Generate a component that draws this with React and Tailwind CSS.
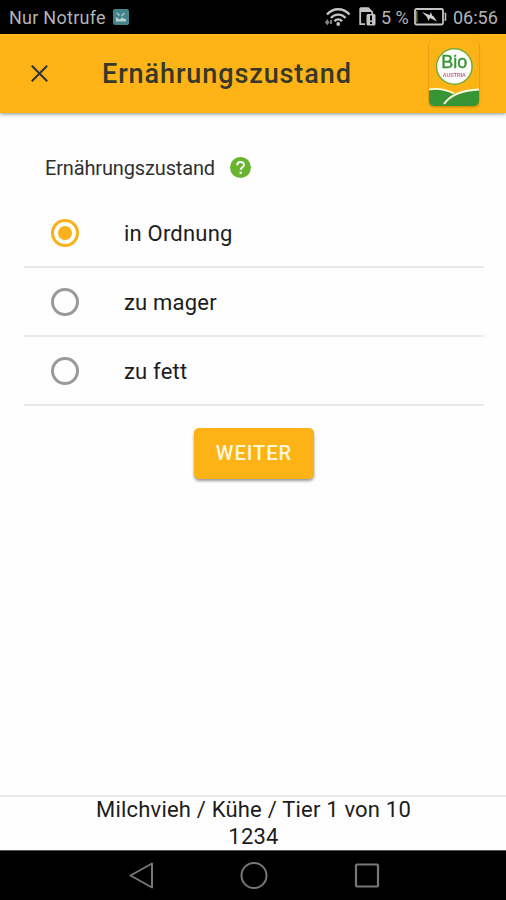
import React from 'react';

const options = [
  { label: 'in Ordnung', checked: true },
  { label: 'zu mager', checked: false },
  { label: 'zu fett', checked: false },
];

const WifiIcon = () => (
  <svg className="w-[27px] h-[20px]" viewBox="0 0 27 20" fill="none" stroke="#c4c4c4">
    <path d="M2 7.500C8 .5 18.500.5 24.500 7.500" strokeWidth="2.400" />
    <path d="M6 11C9.500 6.500 17 6.500 20.500 11" strokeWidth="2.400" />
    <path d="M9.500 14.200C11.500 11.700 15 11.700 17 14.200" strokeWidth="2.400" />
    <circle cx="13.200" cy="17" r="1.900" fill="#c4c4c4" stroke="none" />
    <path d="M2.300 12.500v3M.5 14.500l1.800 2.500 1.800-2.500" strokeWidth="1.600" stroke="#8a8a8a" />
    <path d="M6 17v-4" strokeWidth="1.800" stroke="#8a8a8a" />
  </svg>
);

const SimIcon = () => (
  <svg className="w-[17px] h-[20px]" viewBox="0 0 17 20" fill="none">
    <path d="M1.200 1.200h8l4 4v3M6 17.200H1.200V1.200" stroke="#c4c4c4" strokeWidth="1.800" />
    <path d="M1.500 1.500h7.500l3.500 3.500h-11z" fill="#c4c4c4" />
    <rect x="7.500" y="7" width="9" height="11.500" rx="1.500" fill="#c4c4c4" />
    <path d="M12 8.500v5M12 15v2" stroke="#000" strokeWidth="2" />
  </svg>
);

const BatteryIcon = () => (
  <svg className="w-[33px] h-[18px]" viewBox="0 0 33 18" fill="none">
    <rect x="1" y="1" width="28" height="15.500" rx="1.500" stroke="#c4c4c4" strokeWidth="1.800" />
    <path d="M2.800 3v11.500" stroke="#6f7d3d" strokeWidth="1.500" />
    <path d="M30.500 5.500h1v6.500h-1" stroke="#c4c4c4" strokeWidth="1.500" />
    <path d="M8 4l7.500 3L17 4l1.200 4 .8-.5L23 13.500l-7-3.500-1.500 3-1.500-4z" fill="#d0d0d0" />
  </svg>
);

const StatusBar = () => (
  <div className="flex h-[34px] shrink-0 items-center bg-black pl-[9px] text-[18px] text-[#b4b4b4]">
    <span className="w-[104px] whitespace-nowrap tracking-[0.26px]">Nur Notrufe</span>
    <svg className="w-4 h-4" viewBox="0 0 16 16">
      <rect width="16" height="16" rx="2" fill="#41848b" />
      <path d="M3 12.500V8l3.500 2.500L9 8.500l4 2v2z" fill="#b9d0d2" />
      <path d="M4 4l2.500 2.500M11.500 4L8.500 7" stroke="#a5c5c8" strokeWidth="1.500" />
    </svg>
    <div className="ml-[196px] flex items-center">
      <WifiIcon />
      <div className="ml-[7px]"><SimIcon /></div>
      <span className="ml-[5px] w-[33px] whitespace-nowrap">5 %</span>
      <BatteryIcon />
      <span className="ml-[6px] whitespace-nowrap">06:56</span>
    </div>
  </div>
);

const BioLogo = () => (
  <svg className="mb-[2px] w-[50px] h-[66px] drop-shadow-[0_1px_1px_rgba(80,50,0,0.4)]" viewBox="0 0 50 66">
    <rect width="50" height="66" rx="5" fill="#fbb316" />
    <path d="M0 50C10 48 19 50 26 54 34 50 42 49 50 49V61a5 5 0 0 1-5 5H5a5 5 0 0 1-5-5z" fill="#389536" />
    <path d="M0 49.500C10 47.500 18 50 25 53.500" fill="none" stroke="#fffbe0" strokeWidth="1.800" />
    <path d="M15 64C22 54 35 50 50 49.500" fill="none" stroke="#fffbe0" strokeWidth="1.800" />
    <circle cx="25.300" cy="26.500" r="17.800" fill="#fff" stroke="#76ad36" strokeWidth="1.500" />
    <text x="25.300" y="28" textAnchor="middle" fontFamily="Liberation Sans, sans-serif" fontSize="18" fill="#389536" stroke="#389536" strokeWidth="0.400">Bio</text>
    <text x="25.300" y="36.700" textAnchor="middle" fontFamily="Liberation Sans, sans-serif" fontSize="5.200" fontWeight="bold" fill="#c9607a">AUSTRIA</text>
  </svg>
);

const Header = () => (
  <div className="relative flex h-[79px] shrink-0 items-center bg-[#feb316] pl-[31px] shadow-[0_1px_4px_rgba(0,0,0,0.45)]">
    <svg className="w-[17px] h-[17px]" viewBox="0 0 17 17" stroke="#303336" strokeWidth="2">
      <path d="M.8.8l15.400 15.400M16.200.8L.8 16.200" />
    </svg>
    <h1 className="ml-[54px] w-[327px] whitespace-nowrap pt-[2px] text-[27px] font-medium tracking-[0.9px] text-[#36382c]">Ernährungszustand</h1>
    <BioLogo />
  </div>
);

const Option = ({ label, checked }) => (
  <div className="flex h-[69px] items-center border-b-2 border-[#e9e9e9] pl-[27px] pt-px">
    <span className={checked
      ? 'flex h-7 w-7 items-center justify-center rounded-full border-[3px] border-[#f9b01b]'
      : 'h-7 w-7 rounded-full border-[3px] border-[#9a9a9a]'}
    >
      {checked && <span className="h-[14px] w-[14px] rounded-full bg-[#f9b01b]" />}
    </span>
    <span className="ml-[45px] pt-px text-[22px] tracking-[0.2px]">{label}</span>
  </div>
);

const NavBar = () => (
  <div className="flex h-[50px] shrink-0 items-center justify-center gap-[86px] border-t border-[#555] bg-black pl-px">
    <svg className="w-[26px] h-[28px]" viewBox="0 0 26 28" fill="none" stroke="#777" strokeWidth="2">
      <path d="M24 1.500v24L2.500 13.500z" strokeLinejoin="round" />
    </svg>
    <svg className="w-[28px] h-[28px]" viewBox="0 0 28 28" fill="none" stroke="#777" strokeWidth="2">
      <circle cx="14" cy="13.500" r="12.500" />
    </svg>
    <svg className="w-[26px] h-[26px]" viewBox="0 0 26 26" fill="none" stroke="#777" strokeWidth="2.200">
      <rect x="2" y="1.500" width="22" height="22" rx="1" />
    </svg>
  </div>
);

const App = () => (
  <div className="flex h-[900px] w-[506px] flex-col overflow-hidden bg-[#fefefe] font-['Roboto',sans-serif] text-[#1c1c1c]">
    <StatusBar />
    <Header />
    <main className="flex flex-1 flex-col pl-6 pr-[22px] pt-[39px]">
      <div className="flex h-[30px] items-center pl-[21px]">
        <span className="w-[185px] whitespace-nowrap pt-px text-[20px] tracking-[-0.15px] text-[#303030]">Ernährungszustand</span>
        <svg className="w-[21px] h-[21px]" viewBox="0 0 21 21" fill="none">
          <circle cx="10.500" cy="10.500" r="10.500" fill="#69b32d" />
          <path d="M7.200 8.200c0-4.300 6.800-4.200 6.800-.3 0 2.200-3.300 2.500-3.300 4.800" stroke="#fff" strokeWidth="2" />
          <circle cx="10.700" cy="15.800" r="1.300" fill="#fff" />
        </svg>
      </div>
      <div className="mt-[17px]">
        {options.map((option) => <Option key={option.label} {...option} />)}
      </div>
      <button className="mx-auto mt-[22px] h-[51px] w-[120px] rounded-[5px] bg-[#fdb216] pb-[2px] text-[20px] font-medium tracking-[1px] text-[#fff8df] shadow-[0_2px_3px_rgba(0,0,0,0.4)]">
        WEITER
      </button>
    </main>
    <footer className="h-[55px] shrink-0 border-t-2 border-[#ebebeb] pl-px text-center text-[22px] leading-[27px] tracking-[0.2px]">
      <div className="-mt-px">Milchvieh / Kühe / Tier 1 von 10</div>
      <div>1234</div>
    </footer>
    <NavBar />
  </div>
);

export default App;
